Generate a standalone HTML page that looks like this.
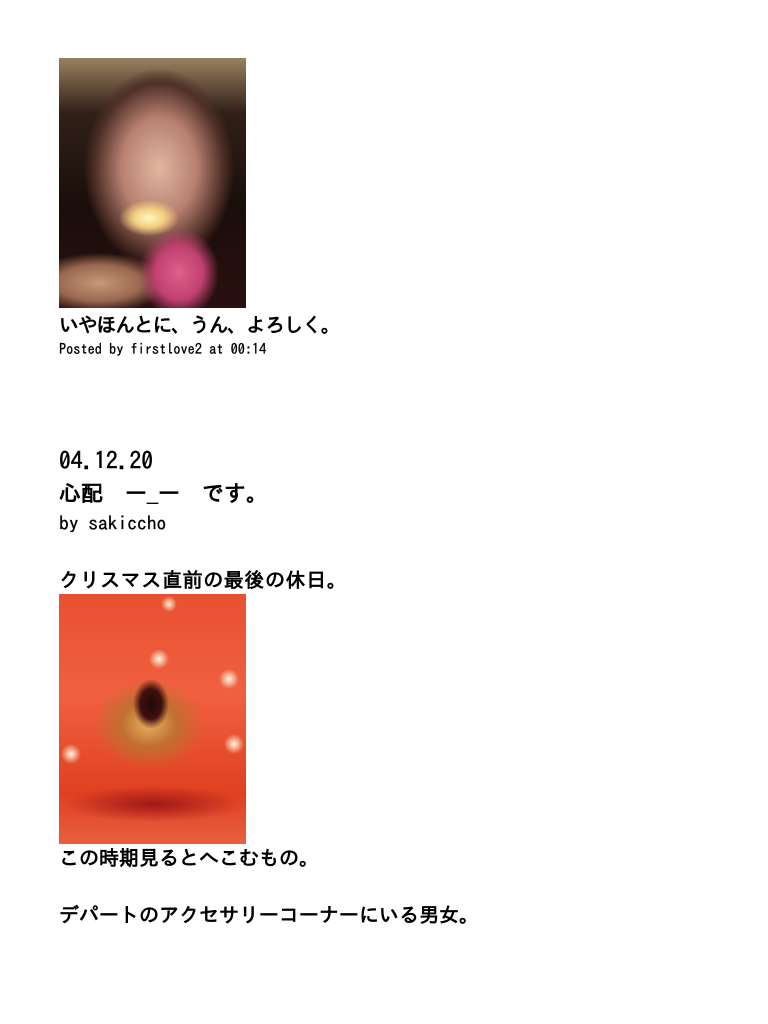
<!DOCTYPE html>
<html><head><meta charset="utf-8"><style>
html,body{margin:0;padding:0;background:#fff;width:768px;height:1024px;overflow:hidden}
body{font-family:"IPAGothic","Noto Sans CJK JP",sans-serif;color:#000;position:relative}
.t{position:absolute;left:59px;white-space:nowrap;font-weight:bold;line-height:1}
.img{position:absolute;left:59px;width:187px;height:250px;overflow:hidden}
#a{top:58px;background:
radial-gradient(ellipse 30px 18px at 90px 160px,#fff6c0 0%,#f4d080 50%,transparent 100%),
radial-gradient(ellipse 40px 45px at 120px 215px,#e0608a 0%,#c04070 60%,transparent 100%),
radial-gradient(ellipse 70px 30px at 40px 225px,#c89878 0%,#9a6850 60%,transparent 100%),
radial-gradient(ellipse 75px 100px at 100px 110px,#e0b8a0 0%,#b88070 50%,#503028 85%,transparent 100%),
linear-gradient(180deg,#9a8060 0%,#302018 22%,#1a0e0a 60%,#2a1010 100%);}
#b{top:594px;background:
radial-gradient(circle 10px at 100px 65px,#fff8e0,transparent),
radial-gradient(circle 10px at 170px 85px,#fff8e0,transparent),
radial-gradient(circle 10px at 12px 160px,#fff8e0,transparent),
radial-gradient(circle 10px at 175px 150px,#fff8e0,transparent),
radial-gradient(circle 8px at 110px 10px,#fff0d0,transparent),
radial-gradient(ellipse 18px 25px at 92px 110px,#200808 0%,#401010 60%,transparent 100%),
radial-gradient(ellipse 55px 45px at 90px 130px,#e8b060 0%,#c07030 50%,transparent 100%),
radial-gradient(ellipse 90px 18px at 95px 210px,#a01818 0%,transparent 100%),
linear-gradient(180deg,#e85030 0%,#f06040 40%,#e04020 80%,#e86040 100%);}
</style></head><body>
<div class="img" id="a"></div>
<div class="t" style="top:315px;font-size:20px;letter-spacing:-1.3px">いやほんとに、うん、よろしく。</div>
<div class="t" style="top:342px;font-size:14.3px;font-weight:normal;-webkit-text-stroke:0.3px #000">Posted by firstlove2 at 00:14</div>
<div class="t" style="top:449px;font-size:23.5px;font-weight:normal;-webkit-text-stroke:0.5px #000">04.12.20</div>
<div class="t" style="top:482px;font-size:22px">心配　ー_ー　です。</div>
<div class="t" style="top:514px;font-size:19.5px;font-weight:normal;-webkit-text-stroke:0.3px #000">by sakiccho</div>
<div class="t" style="top:570px;font-size:20px;letter-spacing:0.6px">クリスマス直前の最後の休日。</div>
<div class="img" id="b"></div>
<div class="t" style="top:848px;font-size:20px">この時期見るとへこむもの。</div>
<div class="t" style="top:905px;font-size:20px">デパートのアクセサリーコーナーにいる男女。</div>
</body></html>
